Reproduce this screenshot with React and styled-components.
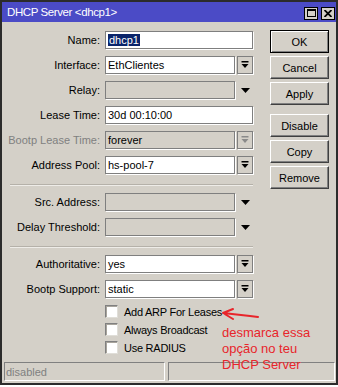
import React from "react";
import styled, { createGlobalStyle, css } from "styled-components";

const GlobalStyle = createGlobalStyle`
  html, body {
    margin: 0;
    padding: 0;
    background: #ffffff;
  }
  body {
    font-family: "Liberation Sans", Arial, sans-serif;
    font-size: 11px;
    color: #000;
  }
`;

const Window = styled.div`
  position: relative;
  box-sizing: border-box;
  width: 338px;
  height: 385px;
  border: 2px solid #2b2b2b;
  background: #d4d0c8;
  display: flex;
  flex-direction: column;
`;

const TitleBar = styled.div`
  height: 20px;
  background: #4b4bc6;
  display: flex;
  align-items: center;
  padding: 0 1px 0 5px;
  color: #fff;
  font-size: 11.5px;
  letter-spacing: -0.4px;
`;

const TitleText = styled.span`
  flex: 1;
`;

const TitleButtons = styled.div`
  display: flex;
  gap: 3px;
  margin-top: 2px;
`;

const TitleButton = styled.div`
  box-sizing: border-box;
  width: 14px;
  height: 13px;
  border: 1px solid #000;
  background: #d4d0c8;
  display: flex;
  align-items: center;
  justify-content: center;
`;

const Body = styled.div`
  flex: 1;
  display: flex;
  padding: 8px 0 0 3px;
`;

const Form = styled.div`
  display: grid;
  grid-template-columns: 95px 148px;
  column-gap: 5px;
  row-gap: 7px;
  align-content: start;
  padding-top: 1px;
`;

const Label = styled.div`
  height: 18px;
  display: flex;
  align-items: center;
  justify-content: flex-end;
  white-space: nowrap;
  color: ${({ $disabled }) => ($disabled ? "#808080" : "#000")};
`;

const Field = styled.div`
  display: flex;
  align-items: center;
  gap: 2px;
`;

const TextBox = styled.div`
  box-sizing: border-box;
  flex: 1;
  height: 18px;
  border: 1px solid #7f7f7f;
  box-shadow: 1px 1px 0 #ffffff;
  background: ${({ $disabled }) => ($disabled ? "#d4d0c8" : "#ffffff")};
  display: flex;
  align-items: center;
  padding-left: 2px;
  white-space: nowrap;
  overflow: hidden;
`;

const Selected = styled.span`
  background: #0a246a;
  color: #fff;
  padding: 0 1px;
`;

const DropButton = styled.div`
  box-sizing: border-box;
  width: 16px;
  height: 18px;
  border: 1px solid #7f7f7f;
  box-shadow: 1px 1px 0 #ffffff;
  background: #d4d0c8;
  display: flex;
  align-items: center;
  justify-content: center;
`;

const PlainArrow = styled.div`
  width: 16px;
  height: 18px;
  display: flex;
  align-items: center;
  justify-content: center;
`;

const Separator = styled.div`
  grid-column: 1 / -1;
  margin: 3px 0 0 5px;
  height: 1px;
  background: #b5b1a9;
  border-bottom: 1px solid #eeece8;
`;

const Checks = styled.div`
  grid-column: 2;
  display: flex;
  flex-direction: column;
  gap: 5px;
`;

const CheckRow = styled.label`
  display: flex;
  align-items: center;
  gap: 6px;
  height: 13px;
  letter-spacing: -0.25px;
  white-space: nowrap;
`;

const CheckBox = styled.span`
  box-sizing: border-box;
  width: 13px;
  height: 13px;
  background: #fff;
  border: 1px solid;
  border-color: #808080 #e0ded8 #e0ded8 #808080;
  box-shadow: inset 1px 1px 0 #a8a49c;
`;

const ButtonColumn = styled.div`
  display: flex;
  flex-direction: column;
  gap: 3px;
  margin-left: 17px;
`;

const Button = styled.div`
  box-sizing: border-box;
  width: 59px;
  height: 23px;
  display: flex;
  align-items: center;
  justify-content: center;
  background: #d4d0c8;
  border: 1px solid;
  border-color: #ffffff #404040 #404040 #ffffff;
  box-shadow: inset -1px -1px 0 #808080;
  margin-top: ${({ $spaced }) => ($spaced ? "6px" : "0")};
  ${({ $default }) =>
    $default &&
    css`
      border-color: #000;
      box-shadow: inset 1px 1px 0 #ffffff, inset -1px -1px 0 #808080;
    `}
`;

const StatusBar = styled.div`
  display: flex;
  gap: 3px;
  padding: 0 1px 2px 2px;
`;

const StatusCell = styled.div`
  box-sizing: border-box;
  height: 19px;
  width: ${({ $width }) => ($width ? `${$width}px` : "auto")};
  flex: ${({ $width }) => ($width ? "none" : "1")};
  border: 1px solid;
  border-color: #808080 #ffffff #ffffff #808080;
  color: #808080;
  display: flex;
  align-items: center;
  padding-left: 1px;
`;

const Note = styled.div`
  position: absolute;
  left: 220px;
  top: 323px;
  color: #e8252b;
  font-size: 13px;
  line-height: 16px;
`;

const NoteArrow = styled.svg`
  position: absolute;
  left: 218px;
  top: 304px;
`;

const ExpandIcon = ({ color = "#000" }) => (
  <svg width="8" height="8" viewBox="0 0 8 8">
    <rect x="0.5" y="0" width="7" height="1.5" fill={color} />
    <path d="M0.5 3 H7.5 L4 7 Z" fill={color} />
  </svg>
);

const DownIcon = () => (
  <svg width="9" height="5" viewBox="0 0 9 5">
    <path d="M0 0 H9 L4.5 5 Z" fill="#000" />
  </svg>
);

const Row = ({ label, disabled, children }) => (
  <>
    <Label $disabled={disabled}>{label}</Label>
    <Field>{children}</Field>
  </>
);

const App = () => (
  <>
    <GlobalStyle />
    <Window>
      <TitleBar>
        <TitleText>DHCP Server &lt;dhcp1&gt;</TitleText>
        <TitleButtons>
          <TitleButton>
            <svg width="9" height="8" viewBox="0 0 9 8">
              <rect x="0.5" y="0.5" width="8" height="7" fill="none" stroke="#000" />
              <rect x="0" y="0" width="9" height="2" fill="#000" />
            </svg>
          </TitleButton>
          <TitleButton>
            <svg width="8" height="7" viewBox="0 0 8 7">
              <path d="M0.5 0 L7.5 7 M7.5 0 L0.5 7" stroke="#000" strokeWidth="1.8" />
            </svg>
          </TitleButton>
        </TitleButtons>
      </TitleBar>

      <Body>
        <Form>
          <Row label="Name:">
            <TextBox>
              <Selected>dhcp1</Selected>
            </TextBox>
          </Row>
          <Row label="Interface:">
            <TextBox>EthClientes</TextBox>
            <DropButton>
              <ExpandIcon />
            </DropButton>
          </Row>
          <Row label="Relay:">
            <TextBox $disabled />
            <PlainArrow>
              <DownIcon />
            </PlainArrow>
          </Row>
          <Row label="Lease Time:">
            <TextBox>30d 00:10:00</TextBox>
          </Row>
          <Row label="Bootp Lease Time:" disabled>
            <TextBox $disabled>forever</TextBox>
            <DropButton>
              <ExpandIcon color="#8a8a8a" />
            </DropButton>
          </Row>
          <Row label="Address Pool:">
            <TextBox>hs-pool-7</TextBox>
            <DropButton>
              <ExpandIcon />
            </DropButton>
          </Row>

          <Separator />

          <Row label="Src. Address:">
            <TextBox $disabled />
            <PlainArrow>
              <DownIcon />
            </PlainArrow>
          </Row>
          <Row label="Delay Threshold:">
            <TextBox $disabled />
            <PlainArrow>
              <DownIcon />
            </PlainArrow>
          </Row>

          <Separator />

          <Row label="Authoritative:">
            <TextBox>yes</TextBox>
            <DropButton>
              <ExpandIcon />
            </DropButton>
          </Row>
          <Row label="Bootp Support:">
            <TextBox>static</TextBox>
            <DropButton>
              <ExpandIcon />
            </DropButton>
          </Row>

          <Checks>
            <CheckRow>
              <CheckBox />
              Add ARP For Leases
            </CheckRow>
            <CheckRow>
              <CheckBox />
              Always Broadcast
            </CheckRow>
            <CheckRow>
              <CheckBox />
              Use RADIUS
            </CheckRow>
          </Checks>
        </Form>

        <ButtonColumn>
          <Button $default>OK</Button>
          <Button>Cancel</Button>
          <Button>Apply</Button>
          <Button $spaced>Disable</Button>
          <Button>Copy</Button>
          <Button>Remove</Button>
        </ButtonColumn>
      </Body>

      <StatusBar>
        <StatusCell $width={161}>disabled</StatusCell>
        <StatusCell />
      </StatusBar>

      <NoteArrow width="44" height="18" viewBox="0 0 44 18">
        <path
          d="M13 3 L3 7 L13 13 M3 7 L12 8 L30 10 L38 11"
          fill="none"
          stroke="#e8252b"
          strokeWidth="2"
          strokeLinecap="round"
          strokeLinejoin="round"
        />
      </NoteArrow>
      <Note>
        desmarca essa
        <br />
        opção no teu
        <br />
        DHCP Server
      </Note>
    </Window>
  </>
);

export default App;
